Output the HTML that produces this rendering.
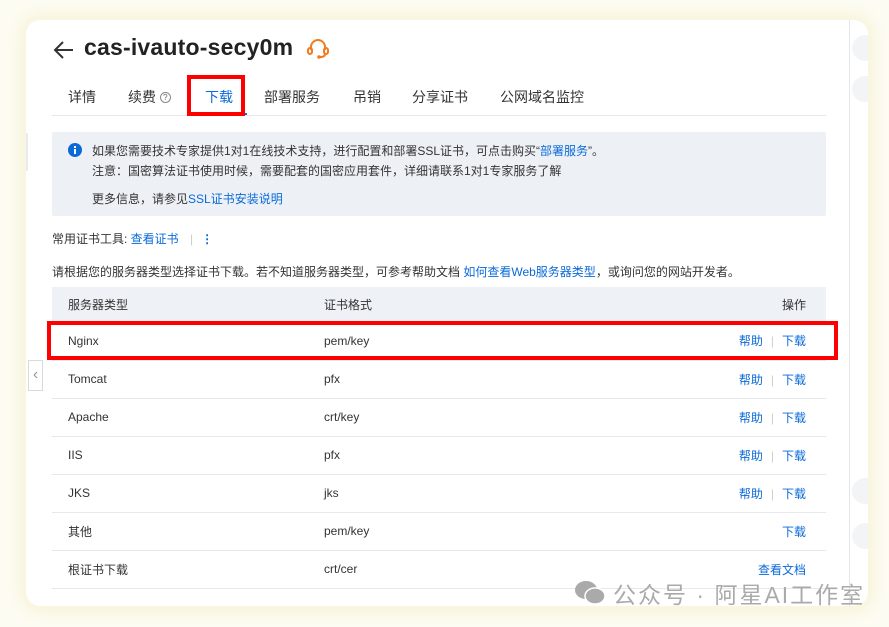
<!DOCTYPE html>
<html><head><meta charset="utf-8"><style>
*{margin:0;padding:0;box-sizing:border-box}
body{width:889px;height:627px;background:#fdfcf3;font-family:"Liberation Sans","Noto Sans CJK SC",sans-serif;position:relative;overflow:hidden;color:#333}
.card{position:absolute;left:26px;top:20px;width:842px;height:586px;background:#fff;border-radius:14px;box-shadow:0 0 16px 6px #f7f3d8;overflow:hidden}
.abs{position:absolute}
.rstrip{position:absolute;left:849px;top:20px;width:1px;height:586px;background:#e4e6ea}
.title{left:84px;top:34px;font-size:23px;font-weight:bold;color:#222;letter-spacing:0.2px}
.tabs{left:52px;top:87px;font-size:14px;color:#333}
.tabs span{position:absolute;white-space:nowrap}
.tabline{left:52px;top:115px;width:774px;height:1px;background:#e5e7eb}
.info{left:52px;top:132px;width:774px;height:84px;background:#edf1f6;border-radius:2px;font-size:12px;color:#333}
.info div{position:absolute;left:40px;white-space:nowrap}
a,.b{color:#0a6ad8}
.t{font-size:12px;white-space:nowrap;position:absolute}
table{position:absolute;left:52px;top:287px;width:774px;border-collapse:collapse;font-size:12px}
td,th{height:38px;padding:0 16px;text-align:left;border-bottom:1px solid #e6e8eb;font-weight:normal}
th{background:#eef1f6;height:35px;border:none;color:#333}
td:first-child{width:256px}
td:last-child,th:last-child{text-align:right;padding-right:20px}
.sep{color:#ccc;margin:0 8px}
.red{position:absolute;border:4px solid #f00}
</style></head><body>
<div class="card"></div>
<div class="rstrip"></div>
<div class="abs" style="left:26px;top:133px;width:2px;height:38px;background:#e8ebef"></div>
<div class="abs" style="left:28px;top:360px;width:15px;height:31px;border:1px solid #d8dadd;background:#fff;color:#999;font-size:16px;line-height:28px;text-align:center">‹</div>
<div class="abs" style="left:852px;top:35px;width:16px;height:26px;background:#f3f4f6;border-radius:13px 0 0 13px"></div>
<div class="abs" style="left:852px;top:76px;width:16px;height:26px;background:#f3f4f6;border-radius:13px 0 0 13px"></div>
<div class="abs" style="left:852px;top:478px;width:16px;height:26px;background:#f3f4f6;border-radius:13px 0 0 13px"></div>
<div class="abs" style="left:852px;top:523px;width:16px;height:26px;background:#f3f4f6;border-radius:13px 0 0 13px"></div>

<svg class="abs" style="left:53px;top:40px" width="22" height="20" viewBox="0 0 22 20"><path d="M20 10H3M10 2L2 10l8 8" fill="none" stroke="#333" stroke-width="2"/></svg>
<div class="abs title">cas-ivauto-secy0m</div>
<svg class="abs" style="left:306px;top:38px" width="24" height="22" viewBox="0 0 24 22"><path d="M5 12V9a7 7 0 0114 0v3" fill="none" stroke="#f47a20" stroke-width="2"/><rect x="2" y="10" width="4" height="6" rx="2" fill="none" stroke="#f47a20" stroke-width="2"/><rect x="18" y="10" width="4" height="6" rx="2" fill="none" stroke="#f47a20" stroke-width="2"/><path d="M19 16q0 3-5 3" fill="none" stroke="#f47a20" stroke-width="2"/><circle cx="13" cy="19" r="1.8" fill="#f47a20"/></svg>

<div class="abs tabs">
<span style="left:16px">详情</span>
<span style="left:76px">续费 <span style="position:relative;font-size:11px;color:#666;border:1px solid #888;border-radius:50%;display:inline-block;width:11px;height:11px;line-height:9px;text-align:center;font-size:8px;top:-2px">?</span></span>
<span style="left:153px;color:#0a6ad8">下载</span>
<span style="left:212px">部署服务</span>
<span style="left:301px">吊销</span>
<span style="left:360px">分享证书</span>
<span style="left:448px">公网域名监控</span>
</div>
<div class="abs" style="left:195px;top:113px;width:52px;height:2px;background:#0a6ad8"></div>
<div class="abs tabline"></div>
<div class="red" style="left:187px;top:75px;width:58px;height:41px"></div>

<div class="abs info">
<svg style="position:absolute;left:16px;top:11px" width="14" height="14" viewBox="0 0 14 14"><circle cx="7" cy="7" r="7" fill="#0a6ad8"/><rect x="6" y="6" width="2" height="5" fill="#fff"/><rect x="6" y="3" width="2" height="2" fill="#fff"/></svg>
<div style="top:10px">如果您需要技术专家提供1对1在线技术支持，进行配置和部署SSL证书，可点击购买“<a>部署服务</a>”。</div>
<div style="top:30px">注意：国密算法证书使用时候，需要配套的国密应用套件，详细请联系1对1专家服务了解</div>
<div style="top:58px">更多信息，请参见<a>SSL证书安装说明</a></div>
</div>

<div class="t" style="left:52px;top:230px">常用证书工具: <span class="b">查看证书</span> <span class="sep">|</span><span class="b" style="font-weight:bold">⋮</span></div>
<div class="t" style="left:52px;top:263px">请根据您的服务器类型选择证书下载。若不知道服务器类型，可参考帮助文档 <span class="b">如何查看Web服务器类型</span>，或询问您的网站开发者。</div>

<table>
<tr><th>服务器类型</th><th>证书格式</th><th>操作</th></tr>
<tr><td>Nginx</td><td>pem/key</td><td><span class="b">帮助</span><span class="sep">|</span><span class="b">下载</span></td></tr>
<tr><td>Tomcat</td><td>pfx</td><td><span class="b">帮助</span><span class="sep">|</span><span class="b">下载</span></td></tr>
<tr><td>Apache</td><td>crt/key</td><td><span class="b">帮助</span><span class="sep">|</span><span class="b">下载</span></td></tr>
<tr><td>IIS</td><td>pfx</td><td><span class="b">帮助</span><span class="sep">|</span><span class="b">下载</span></td></tr>
<tr><td>JKS</td><td>jks</td><td><span class="b">帮助</span><span class="sep">|</span><span class="b">下载</span></td></tr>
<tr><td>其他</td><td>pem/key</td><td><span class="b">下载</span></td></tr>
<tr><td>根证书下载</td><td>crt/cer</td><td><span class="b">查看文档</span></td></tr>
</table>
<div class="red" style="left:47px;top:321px;width:791px;height:39px"></div>

<svg class="abs" style="left:574px;top:580px" width="32" height="26" viewBox="0 0 32 26"><ellipse cx="12" cy="10" rx="11" ry="9" fill="#aaa"/><ellipse cx="21" cy="16" rx="10" ry="8" fill="#aaa" stroke="#fff" stroke-width="1.5"/></svg>
<div class="abs" style="left:613px;top:576px;font-size:23px;color:#aaa;white-space:nowrap;letter-spacing:2px">公众号 · 阿星AI工作室</div>
</body></html>
